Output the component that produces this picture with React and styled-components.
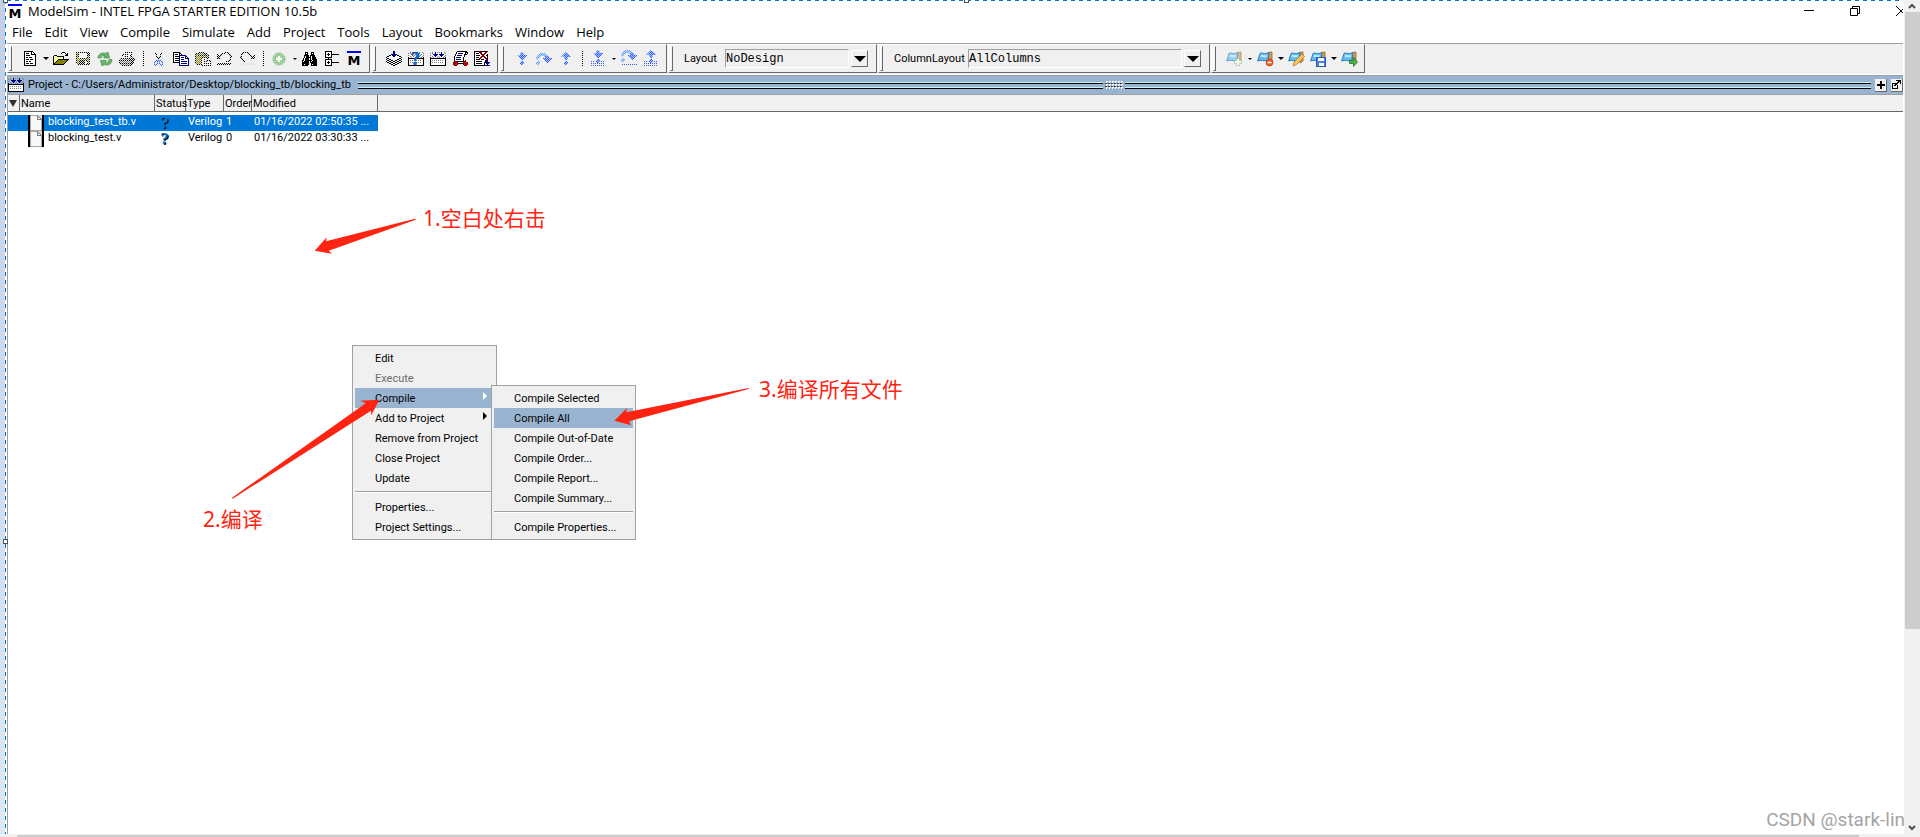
import React from 'react';
import styled, { createGlobalStyle } from 'styled-components';

const GlobalStyle = createGlobalStyle`
  * {
    box-sizing: border-box;
  }

  body {
    margin: 0;
    background: #ffffff;
    color: #000000;
    font-family: Roboto, "Noto Sans CJK SC", sans-serif;
    font-size: 11px;
    overflow: hidden;
  }

  button, select {
    margin: 0;
    padding: 0;
    border: none;
    border-radius: 0;
    background: none;
    color: inherit;
    font: inherit;
  }
`;

const Screen = styled.div`
  position: relative;
  display: flex;
  flex-direction: column;
  height: 100vh;
  overflow: hidden;
`;

const Columns = styled.div`
  display: flex;
  flex: 1;
  min-height: 0;
`;

const DesktopEdge = styled.div`
  width: 5px;
  background: linear-gradient(#c3d0e4, #dce8f5);
`;

const SelectionEdge = styled.div`
  width: 2px;
  background: repeating-linear-gradient(#0078d7 0 4px, #ffffff 4px 8px) left / 1px 100% no-repeat;
`;

const AppWindow = styled.main`
  display: flex;
  flex-direction: column;
  flex: 1;
  min-width: 0;
  overflow: hidden;
`;

const SelectionTop = styled.div`
  height: 1px;
  background: repeating-linear-gradient(90deg, #0078d7 0 4px, #ffffff 4px 8px);
`;

const Handle = styled.span`
  position: absolute;
  top: ${(props) => props.$top};
  left: ${(props) => props.$left};
  width: 5px;
  height: 5px;
  border: 1px solid #505050;
  background: #ffffff;
`;

const TitleBar = styled.header`
  display: flex;
  align-items: center;
  height: 22px;
  padding-left: 1px;
`;

const Title = styled.h1`
  flex: 1;
  margin: 0 0 0 6px;
  font: 400 13px/18px "Open Sans", sans-serif;
  padding-bottom: 2px;
`;

const Mark = styled.span`
  width: 14px;
  height: 16px;
  border-top: 2px solid #0000ff;
  font: 700 13px/15px "DejaVu Sans", sans-serif;
  text-align: center;
`;

const WindowButtons = styled.div`
  display: flex;
  align-self: flex-start;
  gap: 29px;
  margin-right: -6px;
`;

const WindowButton = styled.button`
  display: flex;
  width: 17px;
  height: 19px;
  align-items: center;
  justify-content: center;
`;

const MenuBar = styled.nav`
  display: flex;
  gap: 12px;
  height: 19px;
  padding-left: 5px;
`;

const MenuButton = styled.button`
  font: 13px/19px "Open Sans", sans-serif;
`;

const ToolbarRow = styled.div`
  display: flex;
  gap: 1px;
  height: 33px;
  padding-bottom: 1px;
  border-top: 1px solid #a0a0a0;
  border-bottom: 1px solid #a0a0a0;
  box-shadow: inset 0 -1px #ffffff;
  margin-top: 1px;
  background: #f0f0f0;
`;

const ToolGroup = styled.div`
  display: flex;
  align-items: center;
  height: 29px;
  padding-right: 4px;
  border: 1px solid #696969;
  border-top-color: #ffffff;
  border-left-color: #ffffff;
`;

const Grip = styled.span`
  width: 3px;
  height: 25px;
  margin: 0 7px 0 1px;
  border: 1px solid #696969;
  border-top-color: #ffffff;
  border-left-color: #ffffff;
`;

const ToolButton = styled.button`
  display: flex;
  align-items: center;
  justify-content: center;
  width: 22px;
  height: 22px;
`;

const DropButton = styled.button`
  display: flex;
  align-items: center;
  justify-content: center;
  width: 9px;
  height: 22px;
`;

const Separator = styled.span`
  width: 10px;
  height: 15px;
  background: repeating-linear-gradient(#000000 0 1px, transparent 1px 2px) center / 1px 100% no-repeat;
`;

const ComboLabel = styled.label`
  min-width: ${(props) => props.$width}px;
  padding-left: 4px;
  line-height: 16px;
`;

const ComboSelect = styled.select`
  appearance: none;
  width: ${(props) => props.$width}px;
  height: 19px;
  border: 1px solid #ffffff;
  border-top-color: #a0a0a0;
  border-left-color: #a0a0a0;
  background: #f0f0f0;
  font: 12px "Liberation Mono", monospace;
`;

const ComboArrow = styled.button`
  display: flex;
  align-items: center;
  justify-content: center;
  width: 17px;
  height: 17px;
  margin: 0 4px 0 2px;
  border: 1px solid #696969;
  border-top-color: #ffffff;
  border-left-color: #ffffff;
`;

const Pane = styled.section`
  display: flex;
  flex-direction: column;
  flex: 1;
  border-left: 1px solid #a0a0a0;
`;

const PaneBar = styled.div`
  display: flex;
  align-items: center;
  height: 19px;
  border-bottom: 1px solid #a0a0a0;
  background: #99b4d1;
`;

const PaneTitle = styled.h2`
  margin: 0 7px 0 4px;
  font-size: 11px;
  font-weight: 400;
  line-height: 16px;
`;

const Groove = styled.span`
  flex: 1 1 0;
  height: 7px;
  background: linear-gradient(#c8f0f8 0 1px, #000000 1px 2px, #99b4d1 2px 5px, #c8f0f8 5px 6px, #000000 6px 7px);
`;

const GripDots = styled.span`
  width: 18px;
  height: 8px;
  margin: 0 2px;
  background:
    conic-gradient(#ffffff 25%, transparent 0 50%, #404040 0 75%, transparent 0) 0 0 / 3px 3px;
`;

const PaneButton = styled.button`
  display: flex;
  align-items: center;
  justify-content: center;
  width: 12px;
  height: 13px;
  margin-left: 4px;
  border-right: 1px solid #696969;
  border-bottom: 1px solid #696969;
  background: #f0f0f0;
`;

const FileTable = styled.table`
  width: 100%;
  border-collapse: separate;
  border-spacing: 0;
  table-layout: fixed;

  tbody::before {
    content: "";
    display: block;
    height: 3px;
  }
`;

const Head = styled.th`
  height: 17px;
  padding: 1px 0 0 1px;
  border-right: 1px solid #696969;
  border-bottom: 1px solid #696969;
  background: #f0f0f0;
  font-weight: 400;
  line-height: 15px;
  text-align: left;
  white-space: nowrap;

  &:last-child {
    border-right: none;
  }
`;

const FileRow = styled.tr`
  color: ${(props) => (props.$selected ? '#ffffff' : '#000000')};

  td:not(:last-child) {
    background: ${(props) => (props.$selected ? '#0078d7' : '#ffffff')};
  }
`;

const Cell = styled.td`
  height: 16px;
  padding: 0 0 0 2px;
  line-height: 14px;
  vertical-align: top;
  white-space: nowrap;
`;

const FileName = styled.span`
  display: flex;
  align-items: flex-start;
  gap: 4px;
  height: 16px;
  margin-left: 6px;
`;

const StatusMark = styled.span`
  display: block;
  width: 15px;
  height: 16px;
  color: #0078d7;
  font: 700 17px/15px "Liberation Serif", serif;
  text-align: center;
  text-shadow: 1px 1px #000000;
`;

const Popup = styled.div`
  position: absolute;
  top: ${(props) => props.$top}px;
  left: ${(props) => props.$left}px;
  width: 145px;
  padding: 2px;
  border: 1px solid #a0a0a0;
  background: #f0f0f0;
`;

const PopupItem = styled.button`
  display: flex;
  align-items: center;
  justify-content: space-between;
  width: 100%;
  height: 20px;
  padding: 0 7px 0 20px;
  background: ${(props) => (props.$active ? '#99b4d1' : 'transparent')};
  text-align: left;

  &:disabled {
    color: #6d6d6d;
  }
`;

const PopupLine = styled.hr`
  height: 2px;
  margin: 3px 0 4px;
  border: none;
  border-top: 1px solid #a0a0a0;
  border-bottom: 1px solid #ffffff;
`;

const ArrowShape = styled.svg`
  position: absolute;
  top: ${(props) => props.$top}px;
  left: ${(props) => props.$left}px;
  fill: #ff2412;
`;

const Note = styled.p`
  position: absolute;
  top: ${(props) => props.$top}px;
  left: ${(props) => props.$left}px;
  margin: 0;
  color: #ff2412;
  font: 21px/28px "Noto Sans", "Noto Sans CJK SC", sans-serif;
  white-space: nowrap;
`;

const Watermark = styled.p`
  position: absolute;
  right: 15px;
  bottom: 5px;
  margin: 0;
  color: #a4a4a4;
  font: 19px/24px Roboto, sans-serif;
  text-shadow: 1px 1px #ffffff;
`;

const ScrollTrack = styled.div`
  display: flex;
  flex-direction: column;
  align-items: center;
  justify-content: space-between;
  width: 17px;
  padding: 0 1px;
  border-left: 1px solid #ffffff;
  background: #f0f0f0;
`;

const ScrollArrow = styled.button`
  display: flex;
  align-items: center;
  justify-content: center;
  width: 15px;
  height: 12px;
  flex: none;
`;

const ScrollThumb = styled.div`
  width: 15px;
  height: 74%;
  margin-bottom: auto;
  background: #cdcdcd;
`;

const BottomTrack = styled.div`
  height: 3px;
  padding: 1px 61px 0 17px;
  background: #f0f0f0;
`;

const BottomThumb = styled.div`
  height: 2px;
  background: #cdcdcd;
`;

const palette = {
  K: '#000000',
  W: '#ffffff',
  N: '#000080',
  B: '#2f62ff',
  L: '#6aa8ff',
  Y: '#ffff9c',
  O: '#808000',
  R: '#d00020',
  D: '#800000',
  G: '#808080',
};

const bitmaps = {
  newFile: [
    'KKKKKKKKK....',
    'KWWWWWWKWK...',
    'KWKKKWWKWWK..',
    'KWWWWWWKKKKK.',
    'KWKKKKWWWWWK.',
    'KWWWWWWWWWWK.',
    'KWKKWKKKWWWK.',
    'KWWWWWWWWWWK.',
    'KWKKKWKKKWWK.',
    'KWWWWWWWWWWK.',
    'KWKKWKKWWWWK.',
    'KWWWWWWWWWWK.',
    'KWKKKWKKKWWK.',
    'KWWWWWWWWWWK.',
    'KKKKKKKKKKKK.',
  ],
  open: [
    '.........KKK....',
    '........K...K.K.',
    '.............KK.',
    '.KKK........KKK.',
    'KYYYKKKKKKK.....',
    'KYYYYYYYYYK.....',
    'KYYYYYYYYYK.....',
    'KYYYYKKKKKKKKKKK',
    'KYYYKOOOOOOOOOK.',
    'KYYKOOOOOOOOOK..',
    'KYKOOOOOOOOOK...',
    'KKOOOOOOOOOK....',
    'KKKKKKKKKKK.....',
  ],
  save: [
    'KKKKKKKKKKKKKK',
    'KOKWWWWWWWWKWK',
    'KOKWWWWWWWWKKK',
    'KOKWWWWWWWWKOK',
    'KOKWWWWWWWWKOK',
    'KOKWWWWWWWWKOK',
    'KOOKKKKKKKKOOK',
    'KOOOOOOOOOOOOK',
    'KOOKKKKKKKKKOK',
    'KOOKKKKKKWWKOK',
    'KOOKKKKKKWWKOK',
    'KOOKKKKKKWWKOK',
    '.KKKKKKKKKKKKK',
  ],
  print: [
    '.....KKKKKKKKK..',
    '....KWWWWWWWK...',
    '....KWKKKKWWK...',
    '...KWWWWWWWK....',
    '...KWKKKKWWKKK..',
    '..KWWWWWWWKGKGK.',
    '.KKKKKKKKKKGKGKK',
    'KGGGGGGGGGGKGKGK',
    'KKKKKKKKKKKKKGKK',
    'KGGGGGGOOOGGKKK.',
    'KGGGGGGGGGGGKGK.',
    'KKKKKKKKKKKKKK..',
    '.KGGGGGGGGGGK...',
    '..KKKKKKKKKK....',
  ],
  cut: [
    '...K.....K....',
    '...K.....K....',
    '...KK...KK....',
    '....K...K.....',
    '....KK.KK.....',
    '.....K.K......',
    '.....KKK......',
    '......B.......',
    '....BBBBB.....',
    '...B.B.B.BB...',
    '..B..B.B..B...',
    '..B..B.B..B...',
    '..B.B...B.B...',
    '...B.....B....',
  ],
  copy: [
    'KKKKKKK.........',
    'KWWWWWKK........',
    'KWKKKWKWK.......',
    'KWWWWWNNNNNNN...',
    'KWKKKKNWWWWWNN..',
    'KWWWWWNWNNNWNWN.',
    'KWKKKKNWWWWWNNNN',
    'KWWWWWNWNNNWWWWN',
    'KWKKKKNWWWWWWWWN',
    'KWWWWWNWNNNNNNWN',
    'KKKKKKNWWWWWWWWN',
    '......NWNNNNNNWN',
    '......NWWWWWWWWN',
    '......NNNNNNNNNN',
  ],
  paste: [
    '....KKKKKK......',
    '.KKKKOOOOKKKK...',
    'KOOKOOOOOOKOOK..',
    'KOKKKKKKKKKKOK..',
    'KOOOOOOOOOOOOK..',
    'KOOOOOKKKKKKKK..',
    'KOOOOOKWWWWWKK..',
    'KOOOOOKWKKKWKWK.',
    'KOOOOOKWWWWWKKKK',
    'KOOOOOKWKKKKWWWK',
    'KOOOOOKWWWWWWWWK',
    'KOOOOOKWKKKKKKWK',
    '.KKKKKKWWWWWWWWK',
    '......KKKKKKKKKK',
  ],
  undo: [
    '.......KKKKK....',
    '.....KKK...KK...',
    'K...KK......KK..',
    'KK.KK........K..',
    'KKKK.........KK.',
    'KKK..........KK.',
    'KKKK.........K..',
    '............KK..',
    '...........KK...',
    '.........KKK....',
    '................',
    '.K.K.K.K.K.K.K..',
    'K.K.K.K.K.K.K...',
  ],
  binoculars: [
    '...KKK...KKK....',
    '...KWK...KWK....',
    '...KKK...KKK....',
    '..KKKKK.KKKKK...',
    '..KWKKK.KWKKK...',
    '..KWKKKKKWKKKK..',
    '.KWKKKKWKWKKKK..',
    '.KWKKKKWKWKKKKK.',
    'KKWKKKKKKKWKKKK.',
    'KWKKKKKWKWKKKKK.',
    'KKKKKKK.KKKKKKK.',
    'KKKKKKK..KKKKKK.',
    'KKWKKKK..KWKKKK.',
    'KKKKKK...KKKKKK.',
  ],
  tree: [
    'KKKKKKK.......',
    'KWWWWWK.......',
    'KWWKWWK.......',
    'KWKKKWKKKKKKKK',
    'KWWKWWK.......',
    'KWWWWWK.......',
    'KKKKKKK.......',
    '...K..........',
    'KKKKKKK.......',
    'KWWWWWK.......',
    'KWWKWWK.......',
    'KWKKKWKKKKKKKK',
    'KWWKWWK.......',
    'KWWWWWK.......',
    'KKKKKKK.......',
  ],
  stack: [
    '.......NN.......',
    '.......NN.......',
    '.......NN.......',
    '.....NNNNNN.....',
    '...KKWNNNNWKK...',
    '.KKWWWWNNWWWWKK.',
    'KWWWWWWWWWWWWWWK',
    '.KKWWWWWWWWWWKK.',
    'KWWKKWWWWWWKKWWK',
    '.KKWWKKWWKKWWKK.',
    'KWWKKWWKKWWKKWWK',
    '.KKWWKKWWKKWWKK.',
    '...KKWWKKWWKK...',
    '.....KKWWKK.....',
    '.......KK.......',
  ],
  compileAll: [
    '..G..N.G.G.N..G.',
    'G.G..N.....N...G',
    '...NNNNN.NNNNN..',
    'G...NNN...NNN..G',
    '..G..N..G..N..G.',
    'K..G...G.G...G.K',
    'KKKKKKKKKKKKKKKK',
    'KWWWWWWWWWWWWWWK',
    'KWGWGWGWGWGWGWWK',
    'KWWWWWWWWWWWWWWK',
    'KWGWGWGWGWGWGWWK',
    'KWWWWWWWWWWWWWWK',
    'KWWWWWWWWWWWWWWK',
    'KKKKKKKKKKKKKKKK',
  ],
  compileBase: [
    '..G..G.G.G.G..G.',
    'G.G..G.....G...G',
    '...G...G.G...G..',
    'G...G.G...G.G..G',
    '..G..G..G..G..G.',
    'K..G...G.G...G.K',
    'KKKKKKKKKKKKKKKK',
    'KWWWWWWWWWWWWWWK',
    'KWGWGWGWGWGWGWWK',
    'KWWWWWWWWWWWWWWK',
    'KWGWGWGWGWGWGWWK',
    'KWWWWWWWWWWWWWWK',
    'KWWWWWWWWWWWWWWK',
    'KKKKKKKKKKKKKKKK',
  ],
  simulate: [
    '.....KKKKKKKKKK.',
    '....KWWWWWWWWKKK',
    '....KWNNNNNWWKWK',
    '...KWWWWWWWWKKK.',
    '...KWNNNNNWWK...',
    '..KWWWWWWWWWK...',
    '..KWNNNNNWWK....',
    '..KWWWWWWWWK....',
    '..KWNNNNNWWK....',
    '..KWWWWWWWWK.K..',
    '..DDDKKKKKKDDD..',
    '.DRRRD.....DRRRD',
    '.DRKRDKKKKKDRKRD',
    '.DRRRD.....DRRRD',
    '..DDD.......DDD.',
  ],
  breakSim: [
    'KKKKKDDKKKKKDD..',
    'KWWWWDDDWWWDD...',
    'KWKKKWDDWWDD....',
    'KWWWWWWDDDDW.K..',
    'KWKKKKWWDDWWKK..',
    'KWWWWWWDDDDWWK..',
    'KWKKKWDDWWDDWK..',
    'KWWWWDDWWWWDDK..',
    'KWKKKDWKKKWWDD..',
    'KWWWWWWWWWWKNN..',
    'KWKKKKKKWWWKNN..',
    'KWWWWWWWWWKNNNNN',
    'KWKKKKKKWWK.NNN.',
    'KWWWWWWWWWK..N..',
    'KKKKKKKKKKKNNNNN',
  ],
  stepDown: [
    '......LL......',
    '.....LBBL.....',
    '.....LBBL.....',
    '..LLLBBBBBBB..',
    '...LBBBBBBB...',
    '....LBBBBB....',
    '.....BBBB.....',
    '......BB......',
    '..............',
    '......BB......',
    '.....BBBB.....',
    '.....BBBB.....',
    '......BB......',
  ],
  stepOver: [
    '....LLLLL.......',
    '..LLLLLLLLL.....',
    '.LLLLLLLLLLL....',
    '.LLLL...LBBBB...',
    'LLLL.....BBBB...',
    'LLL....BBBBBBBBB',
    '.L......BBBBBBB.',
    '.........BBBBB..',
    '.LL.......BBB...',
    'LLLL.......B....',
    'LLLL............',
    '.LL.............',
  ],
  stepUp: [
    '......LL......',
    '.....LBBL.....',
    '....LBBBBB....',
    '...LBBBBBBB...',
    '..LLLBBBBBBB..',
    '.....LBBL.....',
    '.....LBBL.....',
    '......BB......',
    '..............',
    '......BB......',
    '.....BBBB.....',
    '.....BBBB.....',
    '......BB......',
  ],
  plus: [
    '...KK...',
    '...KK...',
    '...KK...',
    'KKKKKKKK',
    'KKKKKKKK',
    '...KK...',
    '...KK...',
    '...KK...',
  ],
  undock: [
    '....KKKKK',
    '......KKK',
    '.....KK.K',
    'KKKKKK..K',
    'K..KK....',
    'K.KK.K...',
    'K....K...',
    'K....K...',
    'KKKKKK...',
  ],
};

bitmaps.redo = bitmaps.undo.map((row) => row.split('').reverse().join(''));

// Dithered pixels sit over a faint copy of the same colour.
const Bitmap = ({ name, dither, children }) => {
  const rows = bitmaps[name];
  const paths = {};
  const faint = {};
  rows.forEach((row, y) => {
    row.split('').forEach((c, x) => {
      if (c === '.') return;
      const target = dither && (x + y) % 2 ? faint : paths;
      target[c] = (target[c] || '') + `M${x} ${y}h1v1h-1z`;
    });
  });
  return (
    <svg width={rows[0].length} height={rows.length} shapeRendering="crispEdges" aria-hidden="true">
      {Object.keys(faint).map((c) => (
        <path key={c} d={faint[c]} fill={palette[c]} opacity={c === 'B' || c === 'L' ? 0.35 : 0.08} />
      ))}
      {Object.keys(paths).map((c) => (
        <path key={c} d={paths[c]} fill={palette[c]} />
      ))}
      {children}
    </svg>
  );
};

const DownTriangle = ({ width = 6, height = 3, fill = '#000000' }) => (
  <svg width={width} height={height} aria-hidden="true">
    <path d={`M0 0H${width}L${width / 2} ${height}z`} fill={fill} />
  </svg>
);

const RefreshIcon = () => (
  <svg width="16" height="16" viewBox="0 0 16 16" aria-hidden="true">
    <path d="M1 7C1 3 5 1 9 2.500L11 1 12.500 7H6.500L8 5.500C6 4.500 4 5 4 7z" fill="#69b56c" stroke="#3f9148" strokeWidth=".7" />
    <path d="M15 8.500C15 13 11 15 7 13.500L5 15 3.500 9.500H9.500L8 11C10 12 12 11 12 8.500z" fill="#69b56c" stroke="#3f9148" strokeWidth=".7" />
  </svg>
);

const AddIcon = () => (
  <svg width="14" height="14" viewBox="0 0 14 14" aria-hidden="true">
    <circle cx="7" cy="7" r="6" fill="#b5ddb0" stroke="#55a055" strokeDasharray="1 1" />
    <circle cx="7" cy="7" r="4" fill="none" stroke="#79bd75" strokeWidth="2" strokeDasharray="1 1" />
    <path d="M7 4v6M4 7h6" stroke="#ffffff" strokeWidth="2" />
  </svg>
);

const StepBase = ({ name, wide }) => (
  <svg width="16" height="17" viewBox="0 0 16 17" aria-hidden="true">
    <svg x={wide ? 0 : 1} y="0" width="16" height="13">
      <Bitmap name={name} dither />
    </svg>
    <path
      d={wide ? 'M1 14.500h15' : 'M1 11.500h4M11 11.500h4M1 13.500h14M1 15.500h14'}
      stroke="#2f62ff"
      strokeDasharray="1 1"
    />
  </svg>
);

const BookmarkIcon = ({ badge }) => (
  <svg width="17" height="16" viewBox="0 0 17 16" opacity={badge === 'add' ? 0.65 : 1} aria-hidden="true">
    <path d="M11 1.500L15 1v9l-3 2z" fill="#d79a4d" stroke="#9c6526" strokeWidth=".8" />
    <path d="M3 2.500C5 1 7 4 12 1.500L11 9C7 11 4 8 .700 10z" fill="#67bdf0" stroke="#247bbd" />
    <path d="M4 4c2-.500 3 1 6 0l-.500 2C7 7 5 5 3.500 6z" fill="#c6edff" />
    {badge === 'add' && <path d="M10.500 7.500h3v2h2v3h-2v2h-3v-2h-2v-3h2z" fill="#ffffff" stroke="#3d9b3d" strokeDasharray="1 1" />}
    {badge === 'remove' && (
      <>
        <circle cx="12.500" cy="11.500" r="3.500" fill="#ee5a20" stroke="#b93808" strokeWidth=".6" />
        <path d="M10.500 11.500h4" stroke="#ffffff" strokeWidth="1.500" />
      </>
    )}
    {badge === 'edit' && <path d="M5 15l1-4 8-8 2.500 2.500-8 8z" fill="#f7c65c" stroke="#b77622" strokeWidth=".8" />}
    {badge === 'save' && (
      <>
        <rect x="6.500" y="6.500" width="9" height="9" fill="#4d82dc" stroke="#285aaf" />
        <path d="M8 7h6v3H8zM9 12h5v3H9z" fill="#ffffff" />
      </>
    )}
    {badge === 'go' && <path d="M8.500 9.500h4v-3l4 4.500-4 4.500v-3h-4z" fill="#4caf50" stroke="#267a2b" strokeWidth=".8" />}
  </svg>
);

const FileIcon = () => (
  <svg width="16" height="16" aria-hidden="true">
    <path d="M0 0h16v16H0z" fill="#000000" />
    <path d="M2.500 .500h7l4 4v11h-11z" fill="#f8f8f8" stroke="#a8a8a8" />
    <path d="M9.500 0v4.500H14V0z" fill="#d8d8d8" />
    <path d="M9.500 .500v4h4z" fill="#f0f0f0" stroke="#606060" strokeWidth=".8" />
  </svg>
);

const SubmenuArrow = ({ fill }) => (
  <svg width="4" height="16" aria-hidden="true">
    <path d="M0 2l4 4-4 4z" fill={fill} />
  </svg>
);

const menus = ['File', 'Edit', 'View', 'Compile', 'Simulate', 'Add', 'Project', 'Tools', 'Layout', 'Bookmarks', 'Window', 'Help'];

const files = [
  { name: 'blocking_test_tb.v', type: 'Verilog', order: 1, modified: '01/16/2022 02:50:35 ...', selected: true },
  { name: 'blocking_test.v', type: 'Verilog', order: 0, modified: '01/16/2022 03:30:33 ...' },
];

const contextItems = [
  { label: 'Edit' },
  { label: 'Execute', disabled: true },
  { label: 'Compile', active: true, arrow: '#ffffff' },
  { label: 'Add to Project', arrow: '#000000' },
  { label: 'Remove from Project' },
  { label: 'Close Project' },
  { label: 'Update' },
  null,
  { label: 'Properties...' },
  { label: 'Project Settings...' },
];

const compileItems = [
  { label: 'Compile Selected' },
  { label: 'Compile All', active: true },
  { label: 'Compile Out-of-Date' },
  { label: 'Compile Order...' },
  { label: 'Compile Report...' },
  { label: 'Compile Summary...' },
  null,
  { label: 'Compile Properties...' },
];

const Tool = ({ label, children }) => (
  <ToolButton type="button" aria-label={label}>{children}</ToolButton>
);

const Drop = ({ small }) => (
  <DropButton type="button" aria-label="More">
    <DownTriangle width={small ? 4 : 6} height={small ? 2 : 3} />
  </DropButton>
);

const Combo = ({ id, label, value, labelWidth, width }) => (
  <ToolGroup>
    <Grip />
    <ComboLabel htmlFor={id} $width={labelWidth}>{label}</ComboLabel>
    <ComboSelect id={id} $width={width} defaultValue={value}>
      <option>{value}</option>
    </ComboSelect>
    <ComboArrow type="button" aria-label={`Open ${label}`}>
      <DownTriangle width={12} height={6} />
    </ComboArrow>
  </ToolGroup>
);

const PopupMenu = ({ items, top, left }) => (
  <Popup $top={top} $left={left}>
    {items.map((item, i) =>
      item ? (
        <PopupItem key={item.label} type="button" $active={item.active} disabled={item.disabled}>
          {item.label}
          {item.arrow && <SubmenuArrow fill={item.arrow} />}
        </PopupItem>
      ) : (
        <PopupLine key={i} />
      )
    )}
  </Popup>
);

const Toolbars = () => (
  <ToolbarRow>
    <ToolGroup>
      <Grip />
      <Tool label="New"><Bitmap name="newFile" /></Tool>
      <Drop />
      <Tool label="Open"><Bitmap name="open" /></Tool>
      <Tool label="Save"><Bitmap name="save" dither /></Tool>
      <Tool label="Reload"><RefreshIcon /></Tool>
      <Tool label="Print"><Bitmap name="print" dither /></Tool>
      <Separator />
      <Tool label="Cut"><Bitmap name="cut" dither /></Tool>
      <Tool label="Copy"><Bitmap name="copy" /></Tool>
      <Tool label="Paste"><Bitmap name="paste" dither /></Tool>
      <Tool label="Undo"><Bitmap name="undo" dither /></Tool>
      <Tool label="Redo"><Bitmap name="redo" dither /></Tool>
      <Separator />
      <Tool label="Add"><AddIcon /></Tool>
      <Drop small />
      <Tool label="Find"><Bitmap name="binoculars" /></Tool>
      <Tool label="Collapse"><Bitmap name="tree" /></Tool>
      <Tool label="ModelSim"><Mark>M</Mark></Tool>
    </ToolGroup>
    <ToolGroup>
      <Grip />
      <Tool label="Compile"><Bitmap name="stack" /></Tool>
      <Tool label="Compile out of date">
        <Bitmap name="compileBase">
          <text x="3" y="13" fill="#0078d7" stroke="#00308f" strokeWidth=".5" fontFamily="Liberation Serif" fontWeight="700" fontSize="18">?</text>
        </Bitmap>
      </Tool>
      <Tool label="Compile all"><Bitmap name="compileAll" /></Tool>
      <Tool label="Simulate"><Bitmap name="simulate" /></Tool>
      <Tool label="Break"><Bitmap name="breakSim" /></Tool>
    </ToolGroup>
    <ToolGroup>
      <Grip />
      <Tool label="Step into"><Bitmap name="stepDown" dither /></Tool>
      <Tool label="Step over"><Bitmap name="stepOver" dither /></Tool>
      <Tool label="Step out"><Bitmap name="stepUp" dither /></Tool>
      <Separator />
      <Tool label="Step into current"><StepBase name="stepDown" /></Tool>
      <Drop small />
      <Tool label="Step over current"><StepBase name="stepOver" wide /></Tool>
      <Tool label="Step out current"><StepBase name="stepUp" /></Tool>
    </ToolGroup>
    <Combo id="layout" label="Layout" value="NoDesign" labelWidth={45} width={124} />
    <Combo id="columns" label="ColumnLayout" value="AllColumns" labelWidth={78} width={214} />
    <ToolGroup>
      <Grip />
      <Tool label="Add bookmark"><BookmarkIcon badge="add" /></Tool>
      <Drop small />
      <Tool label="Delete bookmark"><BookmarkIcon badge="remove" /></Tool>
      <Drop />
      <Tool label="Edit bookmark"><BookmarkIcon badge="edit" /></Tool>
      <Tool label="Save bookmarks"><BookmarkIcon badge="save" /></Tool>
      <Drop />
      <Tool label="Go to bookmark"><BookmarkIcon badge="go" /></Tool>
    </ToolGroup>
  </ToolbarRow>
);

const ProjectPane = () => (
  <Pane>
    <PaneBar>
      <Bitmap name="compileAll" />
      <PaneTitle>Project - C:/Users/Administrator/Desktop/blocking_tb/blocking_tb</PaneTitle>
      <Groove />
      <GripDots />
      <Groove />
      <PaneButton type="button" aria-label="Maximize"><Bitmap name="plus" /></PaneButton>
      <PaneButton type="button" aria-label="Undock"><Bitmap name="undock" /></PaneButton>
    </PaneBar>
    <FileTable>
      <colgroup>
        <col width="12" />
        <col width="135" />
        <col width="31" />
        <col width="38" />
        <col width="28" />
        <col width="126" />
        <col />
      </colgroup>
      <thead>
        <tr>
          <Head><DownTriangle width={8} height={7} fill="#303030" /></Head>
          <Head>Name</Head>
          <Head>Status</Head>
          <Head>Type</Head>
          <Head>Order</Head>
          <Head>Modified</Head>
          <Head />
        </tr>
      </thead>
      <tbody>
        {files.map((file) => (
          <FileRow key={file.name} $selected={file.selected}>
            <Cell />
            <Cell><FileName><FileIcon />{file.name}</FileName></Cell>
            <Cell><StatusMark>?</StatusMark></Cell>
            <Cell>{file.type}</Cell>
            <Cell>{file.order}</Cell>
            <Cell>{file.modified}</Cell>
            <Cell />
          </FileRow>
        ))}
      </tbody>
    </FileTable>
  </Pane>
);

const App = () => {
  return (
    <>
      <GlobalStyle />
      <Screen>
        <Columns>
          <DesktopEdge />
          <SelectionEdge />
          <AppWindow>
            <SelectionTop />
            <TitleBar>
              <Mark>M</Mark>
              <Title>ModelSim - INTEL FPGA STARTER EDITION 10.5b</Title>
              <WindowButtons>
                <WindowButton type="button" aria-label="Minimize">
                  <svg width="10" height="1"><path d="M0 .5h10" stroke="#000000" /></svg>
                </WindowButton>
                <WindowButton type="button" aria-label="Restore">
                  <svg width="10" height="10"><path d="M.5 2.500h7v7h-7zM2.500 2V.500h7v7H8" fill="none" stroke="#000000" /></svg>
                </WindowButton>
                <WindowButton type="button" aria-label="Close">
                  <svg width="10" height="10"><path d="M0 0l10 10M10 0L0 10" stroke="#000000" /></svg>
                </WindowButton>
              </WindowButtons>
            </TitleBar>
            <MenuBar>
              {menus.map((menu) => (
                <MenuButton key={menu} type="button">{menu}</MenuButton>
              ))}
            </MenuBar>
            <Toolbars />
            <ProjectPane />
          </AppWindow>
          <ScrollTrack>
            <ScrollArrow type="button" aria-label="Scroll up">
              <svg width="8" height="6"><path d="M1 5l3-3 3 3" fill="none" stroke="#505050" strokeWidth="2" /></svg>
            </ScrollArrow>
            <ScrollThumb />
            <ScrollArrow type="button" aria-label="Scroll down">
              <svg width="8" height="6"><path d="M1 1l3 3 3-3" fill="none" stroke="#505050" strokeWidth="2" /></svg>
            </ScrollArrow>
          </ScrollTrack>
        </Columns>
        <BottomTrack><BottomThumb /></BottomTrack>

        <Handle $top="-2px" $left="3px" />
        <Handle $top="-2px" $left="964px" />
        <Handle $top="539px" $left="3px" />

        <PopupMenu items={contextItems} top={345} left={352} />
        <PopupMenu items={compileItems} top={385} left={491} />

        <ArrowShape $top={218} $left={314} width="104" height="38">
          <path d="M.700 32.700L12.700 19.300 12 23.300 101 .700 102 1 101 2 14.700 32.700 18 35.700z" />
        </ArrowShape>
        <ArrowShape $top={399} $left={231} width="150" height="101">
          <path d="M148.300 .700L129.300 1.700 134.700 4.300 1 98.700 1.700 99.700 140 11.700 140.300 16.300z" />
        </ArrowShape>
        <ArrowShape $top={387} $left={614} width="136" height="40">
          <path d="M.300 33.700L13 21 12.300 25.300 134.700 1V2L15 34.300 17 38.300z" />
        </ArrowShape>
        <Note $top={204} $left={423}>1.空白处右击</Note>
        <Note $top={505} $left={203}>2.编译</Note>
        <Note $top={375} $left={759}>3.编译所有文件</Note>
        <Watermark>CSDN @stark-lin</Watermark>
      </Screen>
    </>
  );
};

export default App;
